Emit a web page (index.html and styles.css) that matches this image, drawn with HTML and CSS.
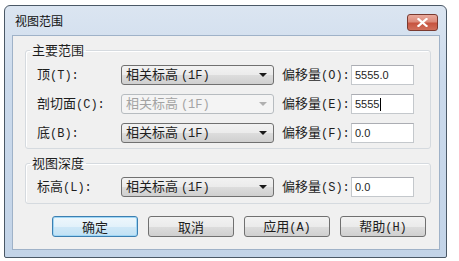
FILE: index.html
```html
<!DOCTYPE html>
<html lang="zh">
<head>
    <meta charset="UTF-8">
    <title>视图范围</title>
    <link rel="stylesheet" href="styles.css">
</head>
<body>
    <div class="window">
        <div class="titlebar">
            <span class="title">视图范围</span>
            <button class="close" title="关闭">
                <svg width="11" height="9" viewBox="0 0 11 9">
                    <path d="M1.5 1 L9.5 8 M9.5 1 L1.5 8" stroke="#fff" stroke-width="2.2" stroke-linecap="square"/>
                </svg>
            </button>
        </div>
        <div class="client">
            <fieldset class="group main">
                <legend>主要范围</legend>
                <div class="row">
                    <span class="label">顶<span class="key">(T):</span></span>
                    <div class="combo"><span>相关标高 <span class="key">(1F)</span></span><i class="arrow"></i></div>
                    <span class="label offset">偏移量<span class="key">(O):</span></span>
                    <div class="field">5555.0</div>
                </div>
                <div class="row">
                    <span class="label">剖切面<span class="key">(C):</span></span>
                    <div class="combo disabled"><span>相关标高 <span class="key">(1F)</span></span><i class="arrow"></i></div>
                    <span class="label offset">偏移量<span class="key">(E):</span></span>
                    <div class="field">5555<span class="caret"></span></div>
                </div>
                <div class="row">
                    <span class="label">底<span class="key">(B):</span></span>
                    <div class="combo"><span>相关标高 <span class="key">(1F)</span></span><i class="arrow"></i></div>
                    <span class="label offset">偏移量<span class="key">(F):</span></span>
                    <div class="field">0.0</div>
                </div>
            </fieldset>
            <fieldset class="group depth">
                <legend>视图深度</legend>
                <div class="row">
                    <span class="label">标高<span class="key">(L):</span></span>
                    <div class="combo"><span>相关标高 <span class="key">(1F)</span></span><i class="arrow"></i></div>
                    <span class="label offset">偏移量<span class="key">(S):</span></span>
                    <div class="field">0.0</div>
                </div>
            </fieldset>
            <div class="buttons">
                <button class="btn default">确定</button>
                <button class="btn">取消</button>
                <button class="btn">应用<span class="key">(A)</span></button>
                <button class="btn">帮助<span class="key">(H)</span></button>
            </div>
        </div>
    </div>
</body>
</html>
```

FILE: styles.css
```css
body {
    margin: 0;
    background-color: #fff;
    font-family: "Noto Sans CJK SC", sans-serif;
    font-size: 13px;
    color: #1e1e1e;
}
.window {
    box-sizing: border-box;
    width: 443px;
    height: 253px;
    margin: 5px 0 0 4px;
    border: 1px solid #4a5866;
    border-radius: 6px 6px 2px 2px;
    background: linear-gradient(to bottom, #dbe5f1 0%, #cbdaec 30%, #c3d4e8 100%);
    padding: 0 6px 7px 7px;
}
.titlebar {
    height: 29px;
    display: flex;
    align-items: flex-start;
    justify-content: space-between;
}
.title {
    margin: 8px 0 0 3px;
    font-size: 12px;
    line-height: 14px;
    color: #111;
}
.close {
    width: 31px;
    height: 17px;
    margin: 8px 2px 0 0;
    padding: 0;
    border: 1px solid #7a3a30;
    border-radius: 3px;
    background: linear-gradient(to bottom, #e9a99c 0%, #dc8b7b 45%, #c75440 55%, #d0705c 100%);
    display: flex;
    align-items: center;
    justify-content: center;
}
.client {
    box-sizing: border-box;
    height: 215px;
    background-color: #f0f0f0;
    border: 1px solid #9fb2c8;
    padding-top: 6px;
}
.group {
    box-sizing: border-box;
    width: 406px;
    margin: 0 0 0 12px;
    border: 1px solid #d5dadf;
    border-radius: 3px;
    box-shadow: inset 1px 1px 0 #fff;
    padding: 7px 0 5px 0;
}
.group legend {
    margin-left: 4px;
    padding: 0 2px;
    font-size: 13px;
    line-height: 16px;
}
.depth {
    margin-top: 6px;
    padding: 6px 0 6px 0;
}
.row {
    display: grid;
    grid-template-columns: 84px 153px 77px 63px;
    align-items: center;
    height: 20px;
    padding-left: 11px;
}
.row + .row {
    margin-top: 9px;
}
.label {
    line-height: 16px;
    white-space: nowrap;
}
.offset {
    padding-left: 8px;
}
.key {
    font-family: "Liberation Mono", monospace;
    font-size: 12px;
}
.combo {
    box-sizing: border-box;
    height: 20px;
    border: 1px solid #707070;
    border-radius: 3px;
    background: linear-gradient(to bottom, #f2f2f2 0%, #ebebeb 50%, #dddddd 50%, #cfcfcf 100%);
    display: flex;
    align-items: center;
    justify-content: space-between;
    padding: 0 6px 0 4px;
    line-height: 16px;
}
.arrow {
    width: 0;
    height: 0;
    border-left: 4px solid transparent;
    border-right: 4px solid transparent;
    border-top: 4px solid #1a1a1a;
}
.combo.disabled {
    border-color: #b7bcc0;
    background: #f4f4f4;
    color: #a3a3a3;
}
.combo.disabled .arrow {
    border-top-color: #b0b0b0;
}
.field {
    box-sizing: border-box;
    height: 20px;
    border: 1px solid #c4c8cc;
    border-top-color: #abadb3;
    background-color: #fff;
    padding: 0 3px;
    font-family: "Liberation Sans", sans-serif;
    font-size: 11px;
    line-height: 18px;
    display: flex;
    align-items: center;
}
.caret {
    display: inline-block;
    width: 1px;
    height: 13px;
    background-color: #000;
    margin-left: 1px;
}
.buttons {
    display: flex;
    gap: 10px;
    margin: 12px 0 0 39px;
}
.btn {
    box-sizing: border-box;
    width: 86px;
    height: 21px;
    padding: 0;
    border: 1px solid #707070;
    border-radius: 3px;
    background: linear-gradient(to bottom, #f2f2f2 0%, #ebebeb 50%, #dddddd 50%, #cfcfcf 100%);
    font-family: "Noto Sans CJK SC", sans-serif;
    font-size: 13px;
    line-height: 17px;
    color: #1e1e1e;
}
.btn.default {
    border-color: #3c7fb1;
    box-shadow: inset 0 0 0 1px #9fd6f5;
    background: linear-gradient(to bottom, #eef7fc 0%, #e2f1fa 50%, #cfe8f7 50%, #c1e1f4 100%);
}
```
